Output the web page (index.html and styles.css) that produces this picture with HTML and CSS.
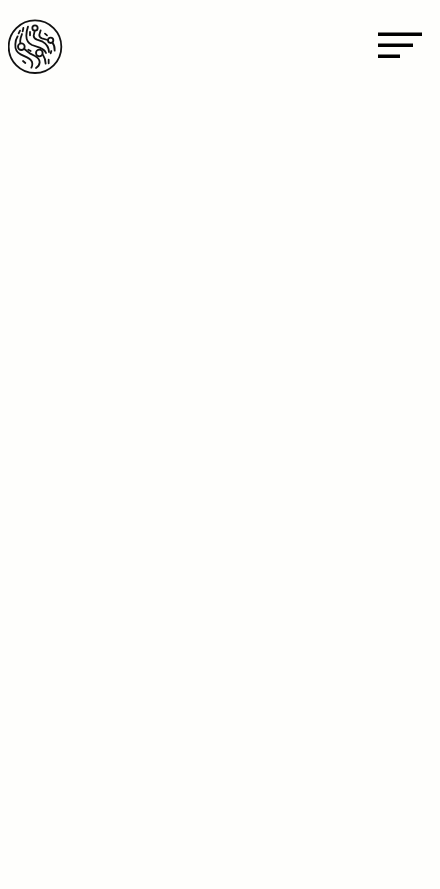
FILE: index.html
```html
<!DOCTYPE html>
<html lang="en">
<head>
  <meta charset="utf-8">
  <meta name="viewport" content="width=device-width, initial-scale=1">
  <title>Home</title>
  <link rel="stylesheet" href="styles.css">
</head>
<body>
  <header class="header">
    <a class="logo" href="#" aria-label="Home">
      <svg class="logo-mark" viewBox="24 27 165 165" aria-hidden="true">
        <circle cx="105" cy="110" r="79"/>
        <circle cx="105" cy="54" r="8"/>
        <circle cx="64" cy="110" r="10"/>
        <circle cx="118" cy="129" r="10"/>
        <circle cx="152" cy="91" r="8"/>
        <path d="M53 79Q46 90 46 103C45 119 50 127 62 133L81 142Q97 150 97 161Q97 168 94 173"/>
        <path d="M70 54L68 64M66 72L62 84Q60 92 61 99M60 62L56 70"/>
        <path d="M84 50Q79 64 79 77C79 91 84 99 96 105L119 113Q134 119 138 129"/>
        <path d="M104 63L101 77Q101 85 111 89L128 95Q146 105 147 126"/>
        <path d="M122 61L118 74Q117 82 126 85L143 90"/>
        <path d="M157 98Q165 107 164 122"/>
        <path d="M73 117L91 131L105 138Q119 146 119 157Q118 168 108 174"/>
        <path d="M129 135Q136 145 137 161"/>
        <path d="M90 66V76M135 71L141 76M85 119L92 123M69 153L76 159M154 123L152 130M146 149V160"/>
      </svg>
    </a>
    <button class="menu" type="button" aria-label="Open menu">
      <svg class="menu-icon" viewBox="0 0 44 26" aria-hidden="true">
        <path d="M0 2.2H44M0 13.2H35M0 24.2H22"/>
      </svg>
    </button>
  </header>
  <main></main>
</body>
</html>
```
FILE: styles.css
```css
body {
  margin: 0;
  min-height: 100vh;
  background: #fefefc;
}

.header {
  display: flex;
  align-items: flex-start;
  justify-content: space-between;
  padding: 19px 18px 19px 8px;
}

.logo,
.logo-mark,
.menu-icon {
  display: block;
}

.logo-mark {
  width: 55px;
  height: 55px;
  fill: none;
  stroke: #111;
  stroke-width: 5.4;
  stroke-linecap: round;
  stroke-linejoin: round;
}

.menu {
  padding: 13px 0;
  border: 0;
  background: none;
  cursor: pointer;
}

.menu-icon {
  width: 44px;
  height: 26px;
  fill: none;
  stroke: #000;
  stroke-width: 3.6;
}
```
